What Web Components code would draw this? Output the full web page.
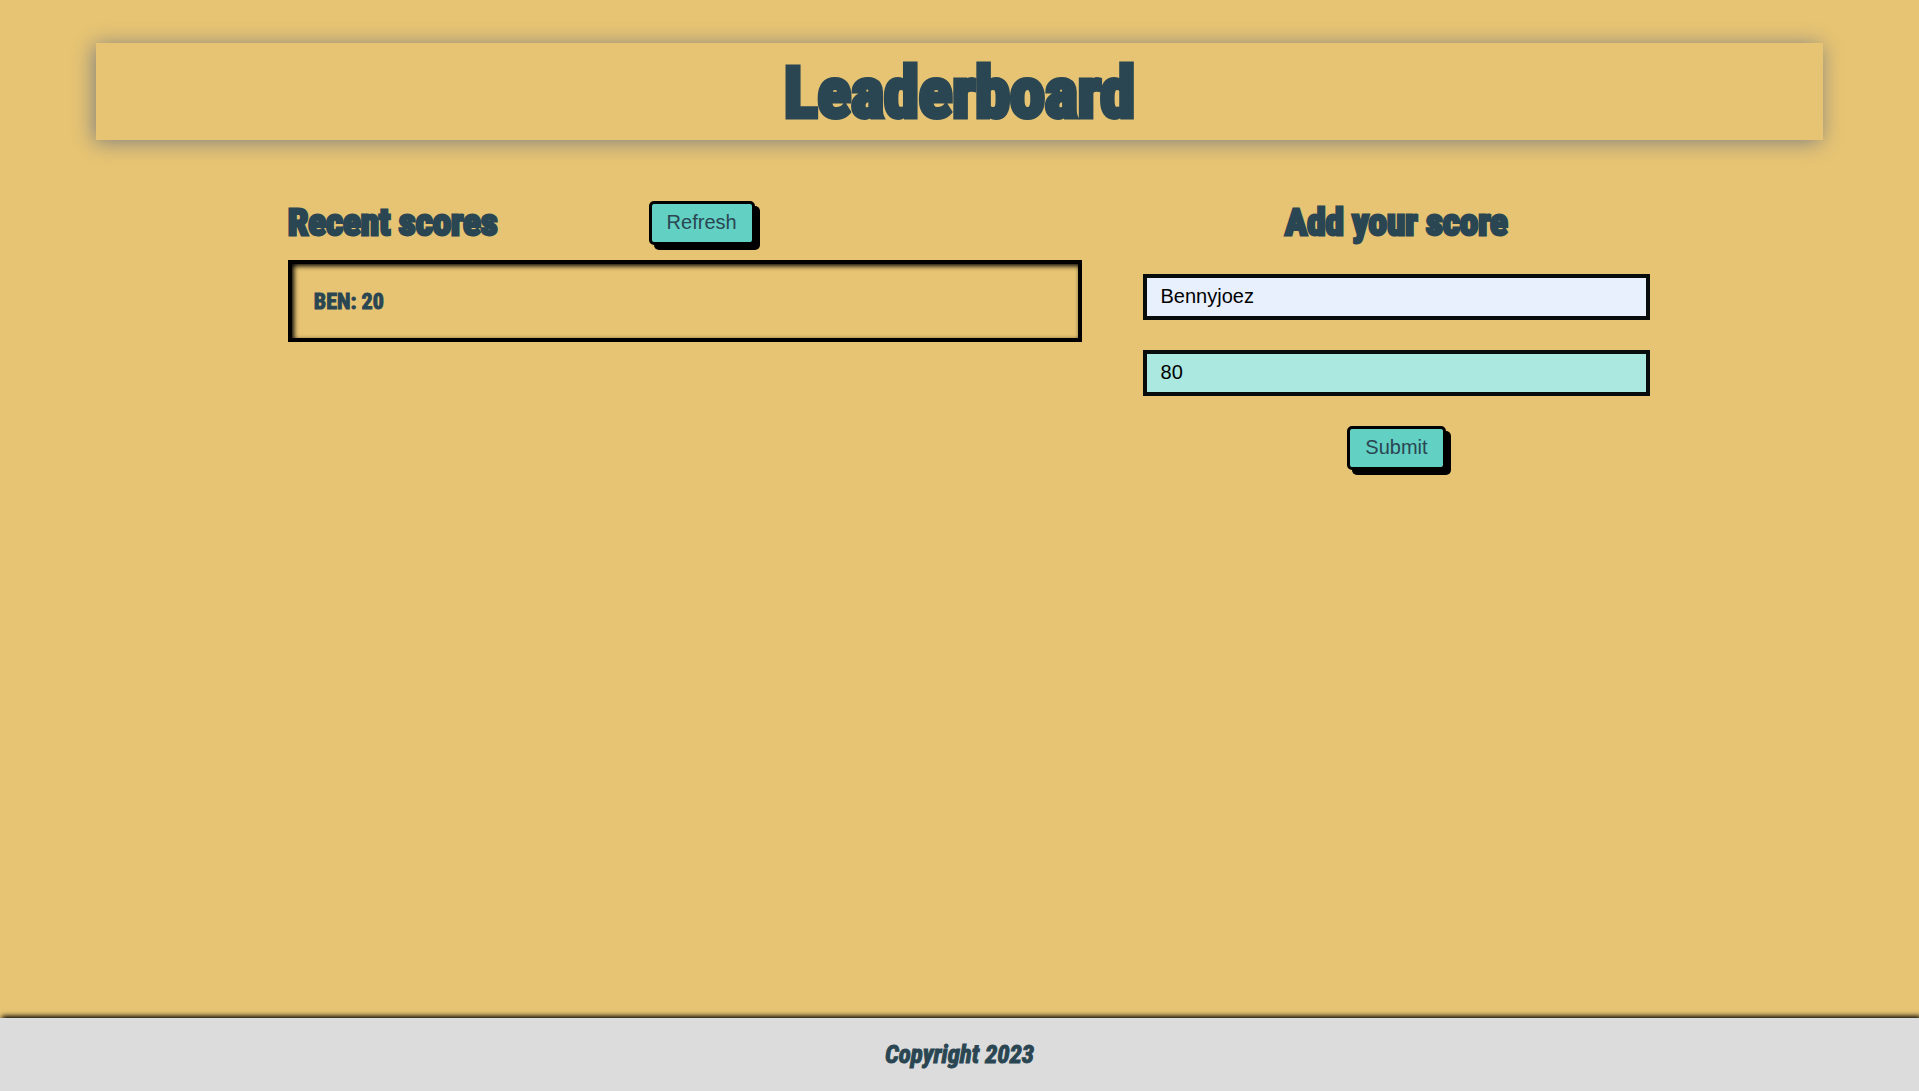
<!DOCTYPE html>
<html lang="en">
<head>
<meta charset="utf-8">
<meta name="viewport" content="width=device-width, initial-scale=1">
<title>Leaderboard</title>
<style>
  body {
    margin: 0;
    --sand: #e7c473;
    --ink: #2a4652;
    --teal: #62d0c3;
    --display: Impact, "Liberation Sans Narrow", "Roboto Condensed", "Open Sans Condensed", "Liberation Sans", sans-serif;
    background: var(--sand);
    color: var(--ink);
    font-family: "Liberation Sans", Arial, sans-serif;
    font-size: 20px;
  }
</style>
</head>
<body>
<leader-app></leader-app>
<script>
class BaseElement extends HTMLElement {
  constructor() {
    super();
    this.attachShadow({ mode: 'open' }).innerHTML = this.constructor.markup;
  }
}

customElements.define('page-header', class extends BaseElement {
  static markup = `
    <style>
      :host { display: block; width: 90%; margin: 43px auto 0; background: var(--sand); box-shadow: -2px 2px 20px #808080; }
      h1 { margin: 0; padding-top: 4px; text-align: center; font: bold 70px/93px var(--display); -webkit-text-stroke: 5px var(--ink); }
    </style>
    <h1><slot></slot></h1>`;
});

customElements.define('push-button', class extends BaseElement {
  static markup = `
    <style>
      :host { display: inline-block; }
      button { display: block; padding: 7px 15px 9px; font: 20px/22px "Liberation Sans", Arial, sans-serif; color: var(--ink); background: var(--teal); border: 3px solid #000; border-radius: 5px; box-shadow: 5px 5px #000; cursor: pointer; }
    </style>
    <button type="button"><slot></slot></button>`;
});

customElements.define('score-list', class extends BaseElement {
  static markup = `
    <style>
      :host { display: block; }
      .bar { display: grid; grid-template-columns: 5fr 6fr; align-items: center; justify-items: start; }
      h2 { margin: 0; font: bold 37px/44px var(--display); -webkit-text-stroke: 3px var(--ink); white-space: nowrap; }
      ul { list-style: none; margin: 15px 0 0; padding: 23px 22px 21px; border: 4px solid #000; box-shadow: inset 2px 2px 5px #000; font: bold 22px/30px var(--display); -webkit-text-stroke: 1px var(--ink); }
    </style>
    <div class="bar"><h2>Recent scores</h2><push-button>Refresh</push-button></div>
    <ul><li>BEN: 20</li></ul>`;
});

customElements.define('score-form', class extends BaseElement {
  static markup = `
    <style>
      :host { display: block; }
      form { display: flex; flex-direction: column; align-items: center; gap: 30px; }
      h2 { margin: 0; font: bold 37px/43px var(--display); -webkit-text-stroke: 3px var(--ink); white-space: nowrap; }
      input { box-sizing: border-box; width: 100%; height: 46px; margin: 0; padding: 0 14px 1px; border: 4px solid #080c0c; border-radius: 0; background: #abe8df; color: #000; font: 20px "Liberation Sans", Arial, sans-serif; outline: 0; }
      .name { background: #e8f0fe; }
    </style>
    <form>
      <h2>Add your score</h2>
      <input class="name" type="text" aria-label="Your name" value="Bennyjoez">
      <input type="text" inputmode="numeric" aria-label="Your score" value="80">
      <push-button>Submit</push-button>
    </form>`;
});

customElements.define('page-footer', class extends BaseElement {
  static markup = `
    <style>
      :host { display: block; margin-top: auto; background: #dcdcdc; box-shadow: 2px -2px 5px #000; }
      p { margin: 0; text-align: center; font: italic bold 25px/73px var(--display); -webkit-text-stroke: 1px var(--ink); }
    </style>
    <p><slot></slot></p>`;
});

customElements.define('leader-app', class extends BaseElement {
  static markup = `
    <style>
      :host { display: flex; flex-direction: column; min-height: 100vh; overflow: hidden; }
      main { display: grid; grid-template-columns: 794fr 508fr; gap: 61px; align-items: start; margin: 61px 14% 40px 15%; }
    </style>
    <page-header>Leaderboard</page-header>
    <main><score-list></score-list><score-form></score-form></main>
    <page-footer>Copyright 2023</page-footer>`;
});
</script>
</body>
</html>
